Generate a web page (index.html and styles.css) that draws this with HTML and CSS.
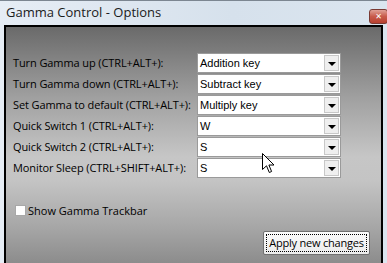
FILE: index.html
```html
<!DOCTYPE html>
<html lang="en">
<head>
    <meta charset="UTF-8">
    <title>Gamma Control - Options</title>
    <link rel="stylesheet" href="styles.css">
</head>
<body>
    <div class="window">
        <div class="titlebar">
            <span class="title">Gamma Control - Options</span>
            <span class="close">&#x2715;</span>
        </div>

        <div class="client">
            <div class="hotkeys">
                <label>Turn Gamma up (CTRL+ALT+):</label>
                <div class="combo"><span>Addition key</span><i></i></div>

                <label>Turn Gamma down (CTRL+ALT+):</label>
                <div class="combo"><span>Subtract key</span><i></i></div>

                <label>Set Gamma to default (CTRL+ALT+):</label>
                <div class="combo"><span>Multiply key</span><i></i></div>

                <label>Quick Switch 1 (CTRL+ALT+):</label>
                <div class="combo"><span>W</span><i></i></div>

                <label>Quick Switch 2 (CTRL+ALT+):</label>
                <div class="combo"><span>S</span><i></i></div>

                <label>Monitor Sleep (CTRL+SHIFT+ALT+):</label>
                <div class="combo"><span>S</span><i></i></div>
            </div>

            <div class="check-row">
                <span class="checkbox"></span>
                <span>Show Gamma Trackbar</span>
            </div>

            <div class="actions">
                <button class="apply"><span>Apply new changes</span></button>
            </div>

            <!-- mouse pointer caught in the screenshot -->
            <svg class="pointer" width="13" height="21" viewBox="0 0 13 21">
                <path d="M0.5 0.5 L0.5 16.5 L4.5 12.8 L7.3 19.5 L9.6 18.5 L6.9 12 L12 12 Z" fill="#fff" stroke="#000" stroke-width="1"/>
            </svg>
        </div>
    </div>
</body>
</html>
```

FILE: styles.css
```css
html, body {
    margin: 0;
    height: 100%;
    overflow: hidden;
}

body {
    font-family: "Open Sans", "Noto Sans", sans-serif;
    font-size: 11px;
    color: #000;
    background: #d9e4ef;
}

.window {
    height: 263px;
    box-sizing: border-box;
    border-top: 1px solid #7c8691;
    padding: 0 4px 0 4px;
    background: linear-gradient(to right, #e6edf5, #d6e1ec 60%, #dbe5ef);
    display: flex;
    flex-direction: column;
}

.titlebar {
    height: 24px;
    display: flex;
    align-items: center;
    justify-content: space-between;
    position: relative;
}

.title {
    font-size: 13px;
    color: #1b1b1b;
    margin-left: 2px;
    margin-top: -3px;
}

.close {
    position: absolute;
    right: -5px;
    top: 8px;
    width: 17px;
    height: 13px;
    border: 1px solid #7a3a33;
    border-radius: 3px;
    background: linear-gradient(#e0a096, #c85a4a 50%, #b8402f);
    color: #fff;
    font-family: "DejaVu Sans", sans-serif;
    font-size: 8px;
    font-weight: bold;
    line-height: 13px;
    text-align: center;
}

.client {
    flex: 1;
    position: relative;
    border: 2px solid #000;
    border-bottom: none;
    background: linear-gradient(#6a6a6a 0%, #a0a0a0 30%, #c6c6c6 55%, #c4c4c4 65%, #a6a6a6 85%, #8c8c8c 100%);
    padding: 26px 11px 0 7px;
}

.hotkeys {
    display: grid;
    grid-template-columns: 184px 144px;
    row-gap: 1px;
    align-items: center;
}

.hotkeys label {
    white-space: nowrap;
    letter-spacing: -0.1px;
    margin-top: -2px;
}

.combo {
    height: 20px;
    box-sizing: border-box;
    border: 1px solid #9a9a9a;
    background: #fff;
    display: flex;
    align-items: center;
    justify-content: space-between;
    font-family: "Liberation Sans", Arial, sans-serif;
    font-size: 11px;
}

.combo span {
    padding-left: 2px;
}

.combo i {
    width: 15px;
    height: 16px;
    margin-right: 1px;
    box-sizing: border-box;
    border: 1px solid #c8c8c8;
    background: #efefef;
    position: relative;
}

.combo i::after {
    content: "";
    position: absolute;
    left: 3px;
    top: 6px;
    border-left: 4px solid transparent;
    border-right: 4px solid transparent;
    border-top: 4px solid #000;
}

.check-row {
    margin-top: 25px;
    margin-left: 2px;
    display: flex;
    align-items: center;
    gap: 2px;
}

.checkbox {
    width: 11px;
    height: 11px;
    box-sizing: border-box;
    border: 1px solid #a8a8a8;
    background: #fff;
}

.actions {
    display: flex;
    justify-content: flex-end;
    margin-top: 13px;
}

.apply {
    width: 107px;
    height: 24px;
    padding: 2px;
    border: 1px solid #707070;
    border-radius: 2px;
    background: linear-gradient(#fbfbfb, #ececec);
    font-family: inherit;
    font-size: 11px;
    color: #000;
    white-space: nowrap;
}

.apply span {
    display: block;
    height: 100%;
    box-sizing: border-box;
    border: 1px dotted #000;
    line-height: 16px;
    letter-spacing: -0.2px;
}

.pointer {
    position: absolute;
    left: 256px;
    top: 126px;
}
```
